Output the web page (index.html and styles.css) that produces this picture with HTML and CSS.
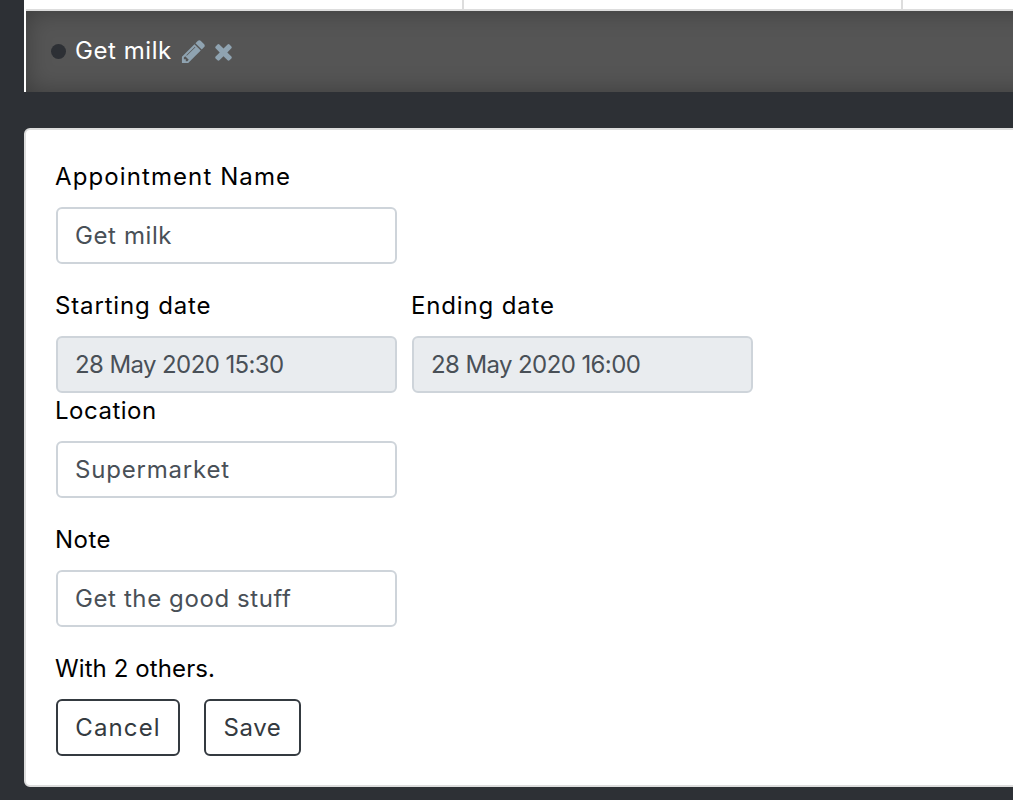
FILE: index.html
```html
<!DOCTYPE html>
<html lang="en">
<head>
    <meta charset="UTF-8">
    <title>Appointment</title>
    <link rel="stylesheet" href="styles.css">
</head>
<body>
  <div class="page">
      <div class="calendar">
          <div class="week-row">
              <div class="day"></div>
              <div class="day"></div>
              <div class="day"></div>
          </div>
          <div class="event">
              <span class="dot"></span>
              <span class="event-name">Get milk</span>
              <svg class="icon icon-edit" viewBox="0 0 1792 1792"><path d="M491 1536l91-91-235-235-91 91v107h128v128h107zm523-928q0-22-22-22-10 0-17 7l-542 542q-7 7-7 17 0 22 22 22 10 0 17-7l542-542q7-7 7-17zm-54-192l416 416-832 832h-416v-416zm683 96q0 53-37 90l-166 166-416-416 166-165q36-38 90-38 53 0 91 38l235 234q37 39 37 91z"/></svg>
              <svg class="icon icon-remove" viewBox="0 0 1792 1792"><path d="M1490 1322q0 40-28 68l-136 136q-28 28-68 28t-68-28l-294-294-294 294q-28 28-68 28t-68-28l-136-136q-28-28-28-68t28-68l294-294-294-294q-28-28-28-68t28-68l136-136q28-28 68-28t68 28l294 294 294-294q28-28 68-28t68 28l136 136q28 28 28 68t-28 68l-294 294 294 294q28 28 28 68z"/></svg>
          </div>
      </div>

      <form class="card">
          <div class="form-group">
              <label for="name" class="wide">Appointment Name</label>
              <input type="text" id="name" class="value-short" value="Get milk">
          </div>
          <div class="date-row">
              <div class="date-col">
                  <label for="start">Starting date</label>
                  <input type="text" id="start" value="28 May 2020 15:30" disabled>
              </div>
              <div class="date-col">
                  <label for="end">Ending date</label>
                  <input type="text" id="end" value="28 May 2020 16:00" disabled>
              </div>
          </div>
          <div class="form-group">
              <label for="location" class="narrow">Location</label>
              <input type="text" id="location" value="Supermarket">
          </div>
          <div class="form-group">
              <label for="note" class="narrow">Note</label>
              <input type="text" id="note" class="value-short" value="Get the good stuff">
          </div>
          <p class="others">With 2 others.</p>
          <div class="actions">
              <button type="button" class="btn btn-cancel">Cancel</button>
              <button type="button" class="btn btn-save">Save</button>
          </div>
      </form>
  </div>
</body>
</html>
```
FILE: styles.css
```css
html, body {
    margin: 0;
    padding: 0;
    height: 800px;
    overflow: hidden;
    background-color: #2d3035;
}
* {
    box-sizing: border-box;
}
body {
    font-family: Inter, "Noto Sans", sans-serif;
    font-size: 24px;
    line-height: 36px;
    color: #000;
}
.page {
    width: 1013px;
    padding-left: 24px;
    overflow: hidden;
}
.calendar {
    width: 1100px;
    border-left: 2px solid #fff;
}
.week-row {
    display: grid;
    grid-template-columns: 438px 439px 1fr;
    height: 11px;
    background-color: #fff;
    border-bottom: 2px solid #ddd;
}
.day {
    border-right: 2px solid #ddd;
}
.event {
    display: flex;
    align-items: center;
    height: 81px;
    padding: 0 0 1px 25px;
    background-color: #555;
    box-shadow: inset 0 0 24px rgba(0, 0, 0, 0.3);
    color: #fff;
}
.dot {
    width: 15px;
    height: 15px;
    border-radius: 50%;
    background-color: #2d3035;
    margin-right: 9px;
}
.event-name {
    letter-spacing: 0.55px;
}
.icon {
    fill: #8fa3b1;
}
.icon-edit {
    width: 27px;
    height: 27px;
    margin-left: 8px;
}
.icon-remove {
    width: 25px;
    height: 25px;
    margin-left: 4px;
}
.card {
    width: 1100px;
    height: 659px;
    margin-top: 36px;
    padding: 29px 30px;
    background-color: #fff;
    border: 2px solid #ddd;
    border-radius: 6px;
}
label {
    display: block;
    margin: 0 0 12px -1px;
    letter-spacing: 0.85px;
}
label.wide {
    letter-spacing: 1.1px;
}
label.narrow {
    letter-spacing: 0.5px;
}
.form-group {
    margin-bottom: 24px;
}
.date-row {
    display: flex;
    gap: 15px;
}
.date-col {
    width: 341px;
}
input {
    display: block;
    width: 341px;
    height: 57px;
    padding: 9px 17px;
    font: inherit;
    letter-spacing: 0.8px;
    color: #495057;
    background-color: #fff;
    border: 2px solid #ced4da;
    border-radius: 6px;
}
input.value-short {
    letter-spacing: 0.6px;
}
input:disabled {
    letter-spacing: -0.6px;
    background-color: #e9ecef;
}
.others {
    margin: 0 0 12px -1px;
    letter-spacing: 0.1px;
}
.actions {
    display: flex;
    gap: 24px;
}
.btn {
    height: 57px;
    padding: 0;
    font: inherit;
    letter-spacing: 1.1px;
    color: #343a40;
    background-color: #fff;
    border: 2px solid #343a40;
    border-radius: 6px;
}
.btn-cancel {
    width: 124px;
}
.btn-save {
    width: 97px;
    letter-spacing: 0.6px;
}
```
